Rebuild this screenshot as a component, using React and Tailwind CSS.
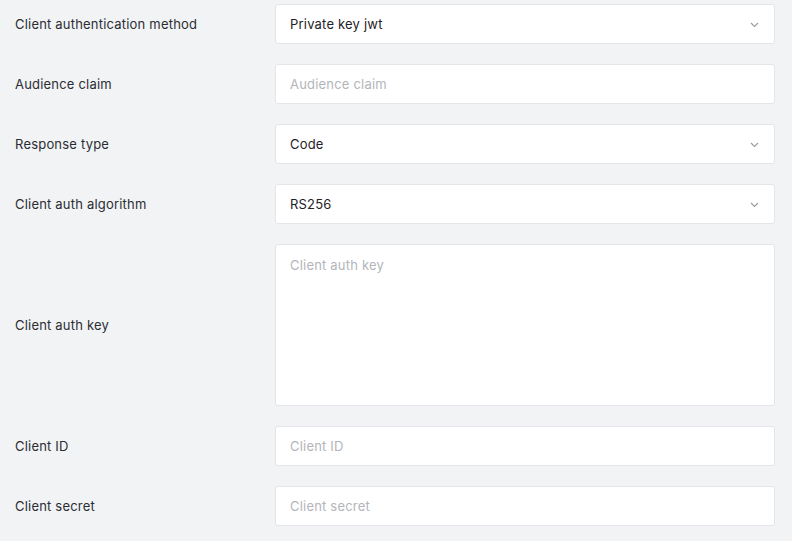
import React from 'react';

const FIELDS = [
  { label: 'Client authentication method', type: 'select', value: 'Private key jwt' },
  { label: 'Audience claim', type: 'input', placeholder: 'Audience claim' },
  { label: 'Response type', type: 'select', value: 'Code' },
  { label: 'Client auth algorithm', type: 'select', value: 'RS256' },
  { label: 'Client auth key', type: 'textarea', placeholder: 'Client auth key' },
  { label: 'Client ID', type: 'input', placeholder: 'Client ID' },
  { label: 'Client secret', type: 'input', placeholder: 'Client secret' },
];

function Chevron() {
  return (
    <svg width="9" height="6" viewBox="0 0 9 6" fill="none" className="text-[#9a9da3]">
      <path d="M1 1l3.5 3.5L8 1" stroke="currentColor" strokeWidth="1.2" />
    </svg>
  );
}

function Field({ f }) {
  const box = 'w-[500px] bg-white border border-[#e4e5e8] rounded-[3px] text-[13px] tracking-[0.2px]';
  if (f.type === 'select') {
    return (
      <div className={`${box} h-10 flex items-center justify-between pl-[14px] pr-[15px] pt-[2px] text-[#1f2227]`}>
        <span>{f.value}</span>
        <Chevron />
      </div>
    );
  }
  if (f.type === 'textarea') {
    return (
      <textarea
        placeholder={f.placeholder}
        className={`${box} h-[162px] resize-none px-[14px] pt-[11px] pb-3 outline-none placeholder-[#b3b5ba]`}
      />
    );
  }
  return (
    <input
      placeholder={f.placeholder}
      className={`${box} h-10 px-[14px] outline-none placeholder-[#b3b5ba]`}
    />
  );
}

export default function App() {
  return (
    <div className="w-[792px] h-[541px] bg-[#f2f3f5] pt-1 overflow-hidden" style={{ fontFamily: 'Inter, sans-serif' }}>
      <div className="flex flex-col gap-5">
        {FIELDS.map((f) => (
          <div key={f.label} className="flex items-center">
            <div className="w-[275px] pl-[15px] pt-[2px] text-[13px] tracking-[0.2px] text-[#2a2d33]">{f.label}</div>
            <Field f={f} />
          </div>
        ))}
      </div>
    </div>
  );
}
